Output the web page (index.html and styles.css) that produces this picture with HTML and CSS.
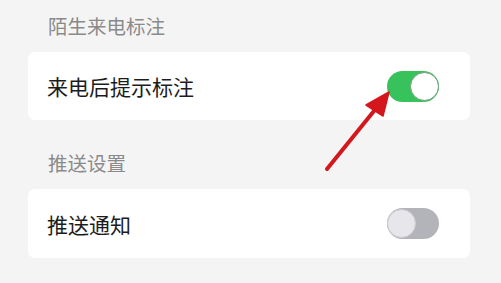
FILE: index.html
```
<!DOCTYPE html>
<html lang="zh-CN">
<head>
<meta charset="utf-8">
<link rel="stylesheet" href="styles.css">
</head>
<body>
<div class="page">
  <section class="group">
    <div class="group-title">陌生来电标注</div>
    <div class="card">
      <span class="label">来电后提示标注</span>
      <span class="switch on"><span class="knob"></span></span>
    </div>
  </section>
  <section class="group">
    <div class="group-title">推送设置</div>
    <div class="card">
      <span class="label">推送通知</span>
      <span class="switch off"><span class="knob"></span></span>
    </div>
  </section>
  <svg class="arrow" width="501" height="283" viewBox="0 0 501 283">
    <line x1="327" y1="169" x2="378" y2="106" stroke="#d4161d" stroke-width="4" stroke-linecap="round"/>
    <polygon points="389,92 366,105 383,116" fill="#d4161d" stroke="#d4161d" stroke-width="1.5" stroke-linejoin="round"/>
  </svg>
</div>
</body>
</html>
```
FILE: styles.css
```
html, body {
  margin: 0;
  padding: 0;
  background: #f4f4f4;
}
.page {
  position: relative;
  width: 501px;
  height: 283px;
  overflow: hidden;
  padding-top: 14px;
  box-sizing: border-box;
  font-family: "Noto Sans CJK SC", "Noto Sans", sans-serif;
}
.group + .group {
  margin-top: 31px;
}
.group-title {
  padding: 0 0 14px 48px;
  font-size: 19.5px;
  line-height: 24px;
  color: #8a8a8a;
}
.card {
  margin-left: 28px;
  width: 442px;
  height: 68px;
  box-sizing: border-box;
  background: #ffffff;
  border-radius: 7px;
  display: flex;
  align-items: center;
  justify-content: space-between;
  padding: 0 31px 0 19px;
}
.group + .group .card {
  height: 69px;
}
.label {
  font-size: 21px;
  line-height: 28px;
  color: #1c1c1c;
}
.switch {
  position: relative;
  width: 52px;
  height: 31px;
  border-radius: 16px;
  box-sizing: border-box;
  display: flex;
  align-items: center;
}
.switch.on {
  background: #38c25c;
  justify-content: flex-end;
}
.switch.off {
  background: #b3b3ba;
  justify-content: flex-start;
}
.knob {
  width: 29px;
  height: 29px;
  border-radius: 50%;
  box-sizing: border-box;
}
.switch.on .knob {
  background: #ffffff;
  border: 1.5px solid #6f9b7c;
}
.switch.off .knob {
  background: #e7e7eb;
  border: 1.5px solid #c9c9ce;
}
.arrow {
  position: absolute;
  left: 0;
  top: 0;
  pointer-events: none;
}
```
